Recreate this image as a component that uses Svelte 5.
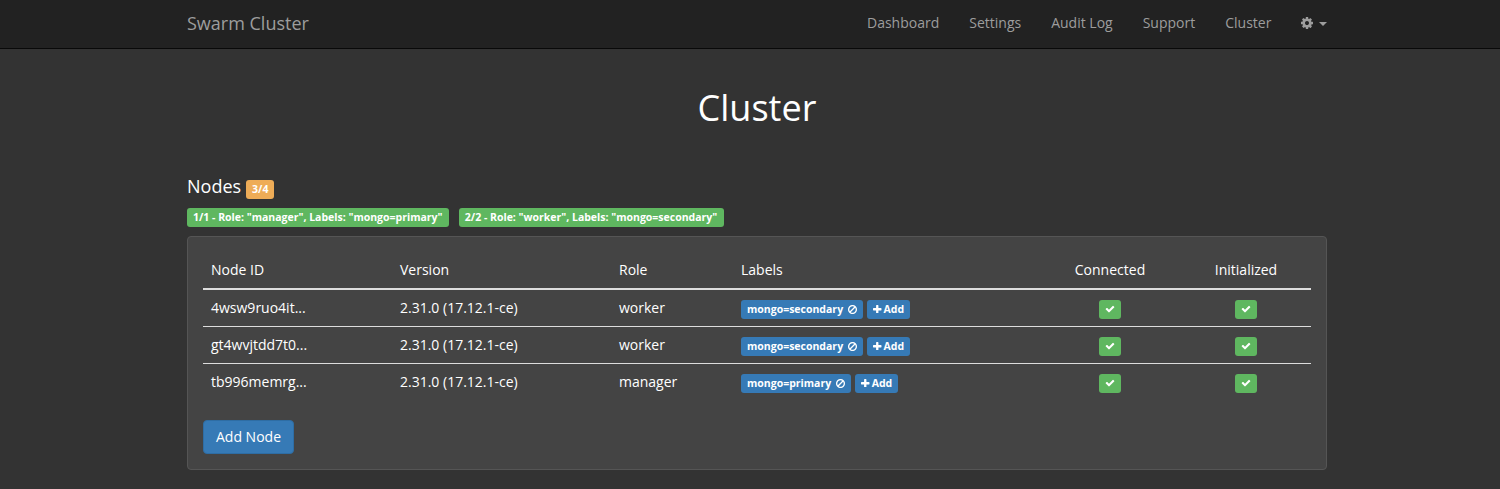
<script>
  const links = ['Dashboard', 'Settings', 'Audit Log', 'Support', 'Cluster'];
  const groups = [
    '1/1 - Role: "manager", Labels: "mongo=primary"',
    '2/2 - Role: "worker", Labels: "mongo=secondary"'
  ];
  const nodes = [
    { id: '4wsw9ruo4it...', version: '2.31.0 (17.12.1-ce)', role: 'worker', label: 'mongo=secondary' },
    { id: 'gt4wvjtdd7t0...', version: '2.31.0 (17.12.1-ce)', role: 'worker', label: 'mongo=secondary' },
    { id: 'tb996memrg...', version: '2.31.0 (17.12.1-ce)', role: 'manager', label: 'mongo=primary' }
  ];
  const icons = {
    cog: 'M1152 896q0-106-75-181t-181-75-181 75-75 181 75 181 181 75 181-75 75-181zm512-109v222q0 12-8 23t-20 13l-185 28q-19 54-39 91 35 50 107 138 10 12 10 25t-9 23q-27 37-99 108t-94 71q-12 0-26-9l-138-108q-44 23-91 38-16 136-29 186-7 28-36 28h-222q-14 0-24.5-8.5t-11.5-21.5l-28-184q-49-16-90-37l-141 107q-10 9-25 9-14 0-25-11-126-114-165-168-7-10-7-23 0-12 8-23 15-21 51-66.5t54-70.5q-27-50-41-99l-183-27q-13-2-21-12.5t-8-23.5v-222q0-12 8-23t19-13l186-28q14-46 39-92-40-57-107-138-10-12-10-24 0-10 9-23 26-36 98.5-107.5t94.5-71.5q13 0 26 10l138 107q44-23 91-38 16-136 29-186 7-28 36-28h222q14 0 24.5 8.5t11.5 21.5l28 184q49 16 90 37l142-107q9-9 24-9 13 0 25 10 129 119 165 170 7 8 7 22 0 12-8 23-15 21-51 66.5t-54 70.5q26 50 41 98l183 28q13 2 21 12.5t8 23.5z',
    plus: 'M1600 736v192q0 40-28 68t-68 28h-416v416q0 40-28 68t-68 28h-192q-40 0-68-28t-28-68v-416h-416q-40 0-68-28t-28-68v-192q0-40 28-68t68-28h416v-416q0-40 28-68t68-28h192q40 0 68 28t28 68v416h416q40 0 68 28t28 68z',
    check: 'M1671 566q0 40-28 68l-724 724-136 136q-28 28-68 28t-68-28l-136-136-362-362q-28-28-28-68t28-68l136-136q28-28 68-28t68 28l294 295 656-657q28-28 68-28t68 28l136 136q28 28 28 68z',
    ban: 'M1440 893q0-161-87-295l-754 753q137 89 297 89 111 0 211.5-43.5t173.5-116.5 116-174.5 43-212.5zm-999 299l755-754q-135-91-300-91-148 0-273 73t-198 199-73 274q0 162 89 299zm1223-299q0 157-61 300t-163.5 246-245 164-298.5 61-298.5-61-245-164-163.5-246-61-300 61-299.5 163.5-245.5 245-164 298.5-61 298.5 61 245 164 163.5 245.5 61 299.5z'
  };
</script>

{#snippet icon(name, box = '0 0 1792 1792')}
  <svg class="icon {name}" viewBox={box} aria-hidden="true"><path d={icons[name]} /></svg>
{/snippet}

<nav class="navbar">
  <div class="container bar">
    <span class="brand">Swarm Cluster</span>
    <div class="links">
      {#each links as link}<a href="#top">{link}</a>{/each}
      <a href="#top" class="gear">{@render icon('cog', '128 128 1536 1536')}<i class="caret"></i></a>
    </div>
  </div>
</nav>

<main class="container">
  <h1>Cluster</h1>
  <h4>Nodes <span class="label warning">3/4</span></h4>
  <div class="groups">
    {#each groups as group}<span class="label success">{group}</span>{/each}
  </div>
  <section class="panel">
    <table>
      <colgroup>
        <col class="c-id" /><col class="c-version" /><col class="c-role" />
        <col class="c-labels" /><col class="c-connected" /><col class="c-init" />
      </colgroup>
      <thead>
        <tr>
          <th>Node ID</th><th>Version</th><th>Role</th><th>Labels</th>
          <th class="center">Connected</th><th class="center">Initialized</th>
        </tr>
      </thead>
      <tbody>
        {#each nodes as node}
          <tr>
            <td>{node.id}</td>
            <td>{node.version}</td>
            <td>{node.role}</td>
            <td>
              <div class="tags">
                <span class="label primary">{node.label}{@render icon('ban', '128 128 1536 1536')}</span>
                <span class="label primary">{@render icon('plus', '192 128 1408 1408')}Add</span>
              </div>
            </td>
            <td><div class="tags mid"><span class="label success tick">{@render icon('check')}</span></div></td>
            <td><div class="tags mid"><span class="label success tick">{@render icon('check')}</span></div></td>
          </tr>
        {/each}
      </tbody>
    </table>
    <button type="button">Add Node</button>
  </section>
</main>

<style>
  :global(body) {
    background: #333;
    color: #fff;
    font: 14px/20px "Open Sans", sans-serif;
    overflow: hidden;
  }
  :global(#app) { height: 489px; }
  .container { width: 1140px; margin-left: 187px; }
  .navbar { height: 48px; background: #222; border-bottom: 1px solid #090909; }
  .bar { display: flex; align-items: flex-start; justify-content: space-between; color: #9d9d9d; }
  .brand { font-size: 18px; line-height: 20px; padding-top: 13px; }
  .links { display: flex; gap: 30px; padding-top: 13px; }
  .links a { color: inherit; text-decoration: none; }
  .gear { display: flex; align-items: center; gap: 6px; }
  .icon { display: block; flex: none; fill: currentColor; }
  .cog { width: 12px; height: 12px; }
  .links .gear { margin-left: -0.4px; }
  .caret {
    border-top: 4px solid currentColor;
    border-left: 4px solid transparent;
    border-right: 4px solid transparent;
    margin-top: 2px;
  }
  h1 { margin: 39px 0 0; font-size: 36px; line-height: 40px; font-weight: 400; text-align: center; }
  h4 {
    display: flex;
    gap: 5px;
    margin: 48px 0 0;
    height: 32px;
    font-size: 18px;
    line-height: 20px;
    font-weight: 400;
  }
  h4 .label { margin-top: 4px; }
  .label {
    display: flex;
    align-items: center;
    box-sizing: border-box;
    height: 19px;
    padding: 0 6px;
    border-radius: 3px;
    font-size: 10.5px;
    line-height: 19px;
    font-weight: 700;
    white-space: nowrap;
  }
  .warning { background: #eeac57; }
  .success { background: #5fb760; }
  .primary { background: #367ab6; }
  .groups { display: flex; gap: 10px; margin-bottom: 9px; }
  .groups .label { padding-right: 6.3px; }
  .panel {
    box-sizing: border-box;
    height: 234px;
    padding: 15px;
    background: #444;
    border: 1px solid #555;
    border-radius: 4px;
  }
  table { width: 1108px; table-layout: fixed; border-collapse: separate; border-spacing: 0; margin-bottom: 20px; }
  .c-id { width: 189px; }
  .c-version { width: 219px; }
  .c-role { width: 122px; }
  .c-labels { width: 306px; }
  .c-connected { width: 142px; }
  .c-init { width: 130px; }
  th { padding: 8px; height: 20px; font-weight: 400; text-align: left; border-bottom: 2px solid #ddd; }
  th.center { text-align: center; }
  td { padding: 8px; height: 20px; }
  tr + tr td { border-top: 1px solid #ddd; }
  .tags { display: flex; gap: 4px; height: 20px; padding-top: 2px; box-sizing: border-box; }
  .tags .label { margin-bottom: -1px; }
  .mid { justify-content: center; }
  .tick { width: 22px; }
  .check { width: 10px; height: 10px; margin-bottom: 1px; }
  .ban { width: 9px; height: 9px; margin: 0 0 1px 5px; }
  .plus { width: 8.5px; height: 8.5px; margin: 0 2px 1px 0; }
  button {
    display: block;
    box-sizing: border-box;
    width: 91px;
    height: 34px;
    padding: 0;
    border: 1px solid #2e6da4;
    border-radius: 4px;
    background: #367ab6;
    color: #fff;
    font: inherit;
  }
</style>
